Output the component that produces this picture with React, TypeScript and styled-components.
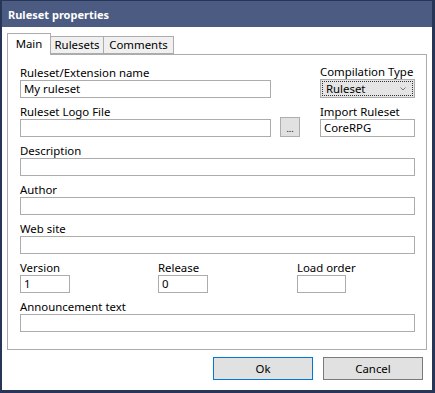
import React from "react";
import styled, {createGlobalStyle} from "styled-components";

const Global = createGlobalStyle`
  html, body {
    margin: 0;
    padding: 0;
    background: #ffffff;
  }

  body {
    font-family: "Noto Sans", "Open Sans", sans-serif;
    font-size: 11.4px;
    color: #000000;
  }
`

const Window = styled.div`
  width: 435px;
  height: 393px;
  box-sizing: border-box;
  background: #273656;
  padding: 1px 3px 3px 2px;
  display: flex;
  flex-direction: column;
`

const TitleBar = styled.div`
  height: 26px;
  background: #4b5b81;
  color: #ffffff;
  font-weight: 700;
  font-size: 11px;
  line-height: 27px;
  padding-left: 6px;
`

const Body = styled.div`
  flex: 1;
  background: #ffffff;
  padding: 6px 5px 0 5px;
  display: flex;
  flex-direction: column;
`

const TabStrip = styled.div`
  display: flex;
  align-items: flex-end;
  height: 21px;
`

const Tab = styled.div<{ $active?: boolean, $width: number }>`
  box-sizing: border-box;
  width: ${p => p.$width}px;
  height: ${p => p.$active ? "22px" : "18px"};
  margin-bottom: ${p => p.$active ? "-1px" : "0"};
  margin-left: -1px;
  border: 1px solid #acacac;
  border-bottom: ${p => p.$active ? "none" : "1px solid #acacac"};
  background: ${p => p.$active ? "#ffffff" : "#f0f0f0"};
  text-align: center;
  line-height: ${p => p.$active ? "19px" : "16px"};
  position: relative;
  z-index: ${p => p.$active ? 1 : 0};

  &:first-child {
    margin-left: 0;
  }
`

const Panel = styled.div`
  box-sizing: border-box;
  height: 296px;
  border: 1px solid #acacac;
  padding: 9px 11px 0 12px;
  display: flex;
  flex-direction: column;
  gap: 6px;
`

const TopRow = styled.div`
  display: grid;
  grid-template-columns: 251px 49px 95px;
  align-items: end;
`

const SmallRow = styled.div`
  display: grid;
  grid-template-columns: 138px 139px 1fr;
`

const Field = styled.div`
  display: flex;
  flex-direction: column;
`

const Label = styled.div`
  height: 15px;
  line-height: 15px;
  white-space: nowrap;
`

const TextBox = styled.div<{ $width?: number }>`
  box-sizing: border-box;
  height: 18px;
  width: ${p => p.$width ? `${p.$width}px` : "100%"};
  border: 1px solid #acacac;
  background: #ffffff;
  padding-left: 3px;
  line-height: 16px;
`

const Combo = styled.div`
  box-sizing: border-box;
  height: 19px;
  border: 1px solid #acacac;
  background: #e5e5e5;
  padding: 1px;
`

const ComboFocus = styled.div`
  box-sizing: border-box;
  height: 100%;
  border: 1px dotted #333333;
  display: flex;
  align-items: center;
  justify-content: space-between;
  padding: 0 6px 0 3px;
  line-height: 15px;
`

const BrowseButton = styled.div`
  box-sizing: border-box;
  height: 20px;
  width: 20px;
  margin-left: 9px;
  border: 1px solid #adadad;
  background: #e1e1e1;
  font-size: 9px;
  text-align: center;
  line-height: 22px;
`

const Footer = styled.div`
  display: flex;
  justify-content: flex-end;
  gap: 10px;
  padding: 7px 4px 0 0;
`

const Button = styled.div<{ $default?: boolean }>`
  box-sizing: border-box;
  width: 100px;
  height: 23px;
  border: 1px solid ${p => p.$default ? "#0078d7" : "#7a7a7a"};
  background: #e1e1e1;
  text-align: center;
  line-height: 21px;
`

const Chevron = () => (
    <svg width="6" height="4" viewBox="0 0 6 4">
        <path d="M0.5 0.5 L3 3 L5.5 0.5" stroke="#777" strokeWidth="1" fill="none"/>
    </svg>
)

export default function App() {
    return <>
        <Global/>
        <Window>
            <TitleBar>Ruleset properties</TitleBar>
            <Body>
                <TabStrip>
                    <Tab $active $width={44}>Main</Tab>
                    <Tab $width={54}>Rulesets</Tab>
                    <Tab $width={71}>Comments</Tab>
                </TabStrip>
                <Panel>
                    <TopRow>
                        <Field>
                            <Label>Ruleset/Extension name</Label>
                            <TextBox>My ruleset</TextBox>
                        </Field>
                        <div/>
                        <Field>
                            <Label>Compilation Type</Label>
                            <Combo>
                                <ComboFocus>Ruleset<Chevron/></ComboFocus>
                            </Combo>
                        </Field>
                    </TopRow>
                    <TopRow>
                        <Field>
                            <Label>Ruleset Logo File</Label>
                            <TextBox/>
                        </Field>
                        <BrowseButton>...</BrowseButton>
                        <Field>
                            <Label>Import Ruleset</Label>
                            <TextBox>CoreRPG</TextBox>
                        </Field>
                    </TopRow>
                    <Field>
                        <Label>Description</Label>
                        <TextBox/>
                    </Field>
                    <Field>
                        <Label>Author</Label>
                        <TextBox/>
                    </Field>
                    <Field>
                        <Label>Web site</Label>
                        <TextBox/>
                    </Field>
                    <SmallRow>
                        <Field>
                            <Label>Version</Label>
                            <TextBox $width={50}>1</TextBox>
                        </Field>
                        <Field>
                            <Label>Release</Label>
                            <TextBox $width={50}>0</TextBox>
                        </Field>
                        <Field>
                            <Label>Load order</Label>
                            <TextBox $width={49}/>
                        </Field>
                    </SmallRow>
                    <Field>
                        <Label>Announcement text</Label>
                        <TextBox/>
                    </Field>
                </Panel>
                <Footer>
                    <Button $default>Ok</Button>
                    <Button>Cancel</Button>
                </Footer>
            </Body>
        </Window>
    </>
}
